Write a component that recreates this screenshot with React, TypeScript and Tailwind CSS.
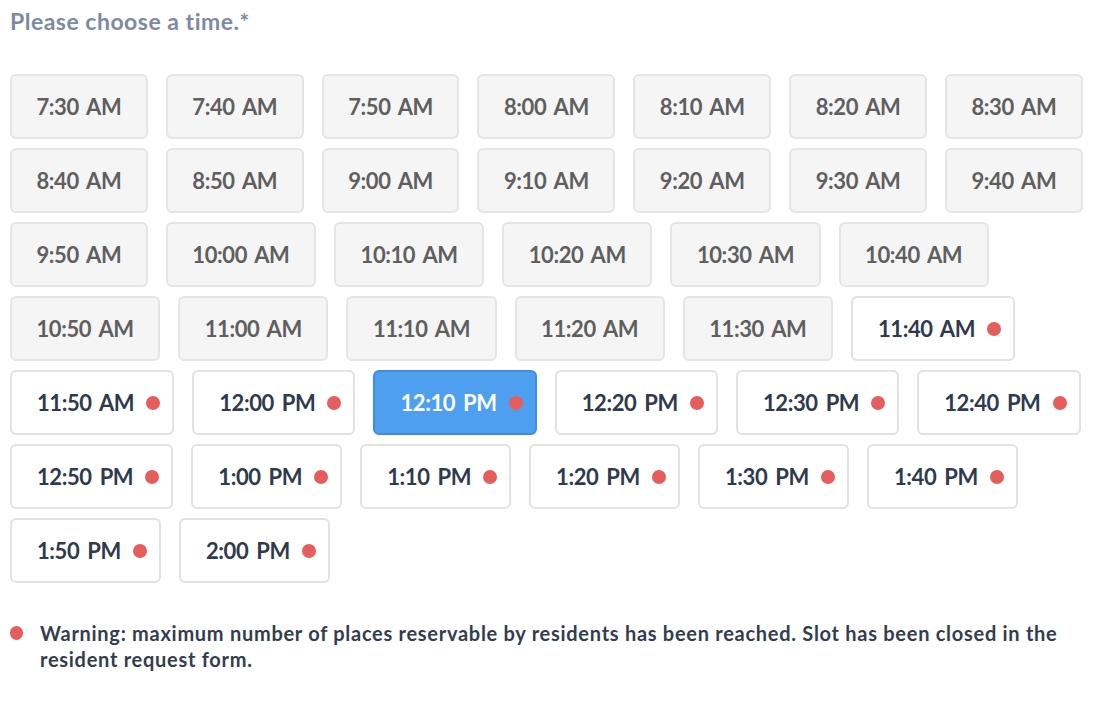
import React from 'react';

type Slot = { label: string; full?: boolean };

const slots: Slot[] = [
  { label: '7:30 AM' },
  { label: '7:40 AM' },
  { label: '7:50 AM' },
  { label: '8:00 AM' },
  { label: '8:10 AM' },
  { label: '8:20 AM' },
  { label: '8:30 AM' },
  { label: '8:40 AM' },
  { label: '8:50 AM' },
  { label: '9:00 AM' },
  { label: '9:10 AM' },
  { label: '9:20 AM' },
  { label: '9:30 AM' },
  { label: '9:40 AM' },
  { label: '9:50 AM' },
  { label: '10:00 AM' },
  { label: '10:10 AM' },
  { label: '10:20 AM' },
  { label: '10:30 AM' },
  { label: '10:40 AM' },
  { label: '10:50 AM' },
  { label: '11:00 AM' },
  { label: '11:10 AM' },
  { label: '11:20 AM' },
  { label: '11:30 AM' },
  { label: '11:40 AM', full: true },
  { label: '11:50 AM', full: true },
  { label: '12:00 PM', full: true },
  { label: '12:10 PM', full: true },
  { label: '12:20 PM', full: true },
  { label: '12:30 PM', full: true },
  { label: '12:40 PM', full: true },
  { label: '12:50 PM', full: true },
  { label: '1:00 PM', full: true },
  { label: '1:10 PM', full: true },
  { label: '1:20 PM', full: true },
  { label: '1:30 PM', full: true },
  { label: '1:40 PM', full: true },
  { label: '1:50 PM', full: true },
  { label: '2:00 PM', full: true },
];

const SELECTED = '12:10 PM';

const Dot = () => <span className="inline-block w-[14px] h-[14px] rounded-full bg-[#e55d5d] shrink-0" />;

const SlotButton: React.FC<{ slot: Slot }> = ({ slot }) => {
  const selected = slot.label === SELECTED;
  let tone = 'bg-[#f5f5f5] border-[#e5e5e5] text-[#5f5f5f]';
  if (slot.full) tone = 'bg-white border-[#e2e2e2] text-[#2f3a4e]';
  if (selected) tone = 'bg-[#4f9ff0] border-[#3d8de2] text-white';

  return (
    <button
      type="button"
      className={`h-[65px] flex items-center border-2 rounded-[6px] text-[22px] font-bold tracking-[-0.4px] [word-spacing:3px] leading-none ${tone} ${
        slot.full ? 'pl-[25px] pr-[12px] gap-[12px]' : 'px-[24.5px]'
      }`}
    >
      <span>{slot.label}</span>
      {slot.full && <Dot />}
    </button>
  );
};

export default function App() {
  return (
    <div className="w-[1112px] h-[706px] bg-white px-[10px] pt-[6px]" style={{ fontFamily: 'Lato, "Noto Sans", sans-serif' }}>
      <h2 className="text-[23px] font-bold tracking-[0.5px] text-[#7b8ba1] leading-[30px]">Please choose a time.*</h2>

      <div className="mt-[38px] flex flex-wrap gap-x-[18px] gap-y-[9px] w-[1092px]">
        {slots.map((s) => (
          <SlotButton key={s.label} slot={s} />
        ))}
      </div>

      <div className="mt-[37px] flex items-start gap-[17px]">
        <span className="mt-[6px] inline-block w-[13px] h-[14px] rounded-full bg-[#e55d5d] shrink-0" />
        <p className="text-[20px] font-bold tracking-[0.72px] text-[#333d50] leading-[26px] w-[1045px]">
          Warning: maximum number of places reservable by residents has been reached. Slot has been closed in the
          resident request form.
        </p>
      </div>
    </div>
  );
}
